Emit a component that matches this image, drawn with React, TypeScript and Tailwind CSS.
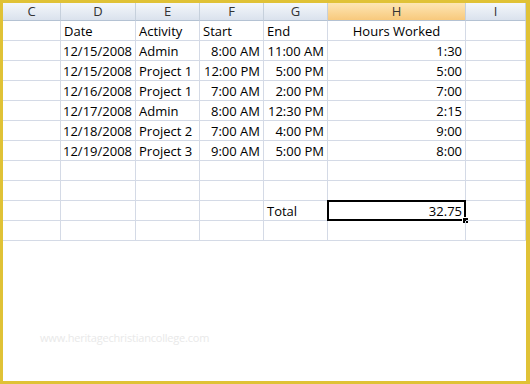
import React from "react";

type Align = "l" | "r" | "c";
type Cell = { t?: string; a?: Align };

const cols = [
  { key: "C", w: "w-[58px]" },
  { key: "D", w: "w-[75px]" },
  { key: "E", w: "w-[64px]" },
  { key: "F", w: "w-[64px]" },
  { key: "G", w: "w-[64px]" },
  { key: "H", w: "w-[138px]" },
  { key: "I", w: "w-[60px]" },
];

const entries = [
  ["12/15/2008", "Admin", "8:00 AM", "11:00 AM", "1:30"],
  ["12/15/2008", "Project 1", "12:00 PM", "5:00 PM", "5:00"],
  ["12/16/2008", "Project 1", "7:00 AM", "2:00 PM", "7:00"],
  ["12/17/2008", "Admin", "8:00 AM", "12:30 PM", "2:15"],
  ["12/18/2008", "Project 2", "7:00 AM", "4:00 PM", "9:00"],
  ["12/19/2008", "Project 3", "9:00 AM", "5:00 PM", "8:00"],
];

const empty: Cell[] = [{}, {}, {}, {}, {}, {}, {}];

const rows: Cell[][] = [
  [{}, { t: "Date" }, { t: "Activity" }, { t: "Start" }, { t: "End" }, { t: "Hours Worked", a: "c" }, {}],
  ...entries.map(([d, act, s, e, h]) => [
    {},
    { t: d, a: "r" as Align },
    { t: act },
    { t: s, a: "r" as Align },
    { t: e, a: "r" as Align },
    { t: h, a: "r" as Align },
    {},
  ]),
  empty,
  empty,
  [{}, {}, {}, {}, { t: "Total" }, { t: "32.75", a: "r" }, {}],
  empty,
];

function alignClass(a?: Align) {
  if (a === "r") return "justify-end pr-[3px]";
  if (a === "c") return "justify-center";
  return "justify-start pl-[3px]";
}

export default function App() {
  return (
    <div
      className="w-[530px] h-[384px] bg-white border-[#e0c236] border-t-[3px] border-l-[3px] border-r-[4px] border-b-[3px] overflow-hidden relative"
      style={{ fontFamily: '"Open Sans", "Noto Sans", sans-serif' }}
    >
      {/* column headers */}
      <div className="flex h-[18px]">
        {cols.map((c) => (
          <div
            key={c.key}
            className={`${c.w} shrink-0 flex items-center justify-center text-[13px] text-[#333] border-r border-b border-r-[#c6d0dc] border-b-[#b4c2d3] ${
              c.key === "H"
                ? "bg-gradient-to-b from-[#fde6b4] to-[#f8c97c]"
                : "bg-gradient-to-b from-[#f4f7fb] to-[#dae2ed]"
            }`}
          >
            {c.key}
          </div>
        ))}
      </div>

      {rows.map((row, ri) => (
        <div key={ri} className="flex h-[20px]">
          {row.map((cell, ci) => {
            const selected = ri === 9 && ci === 5;
            return (
              <div
                key={ci}
                className={`${cols[ci].w} shrink-0 relative flex items-end border-r border-b border-[#d4dae6] text-[13px] leading-[17px] text-black whitespace-nowrap ${alignClass(cell.a)}`}
              >
                {cell.t}
                {selected && (
                  <>
                    <div className="absolute -left-[1px] -top-[1px] -right-[1px] -bottom-[1px] border-[2px] border-black" />
                    <div className="absolute -right-[4px] -bottom-[4px] w-[7px] h-[7px] bg-black border border-white" />
                  </>
                )}
              </div>
            );
          })}
        </div>
      ))}

      <div className="pl-[37px] pt-[89px] text-[11px] text-[#e9e9e9] tracking-[-0.2px]">
        www.heritagechristiancollege.com
      </div>
    </div>
  );
}
